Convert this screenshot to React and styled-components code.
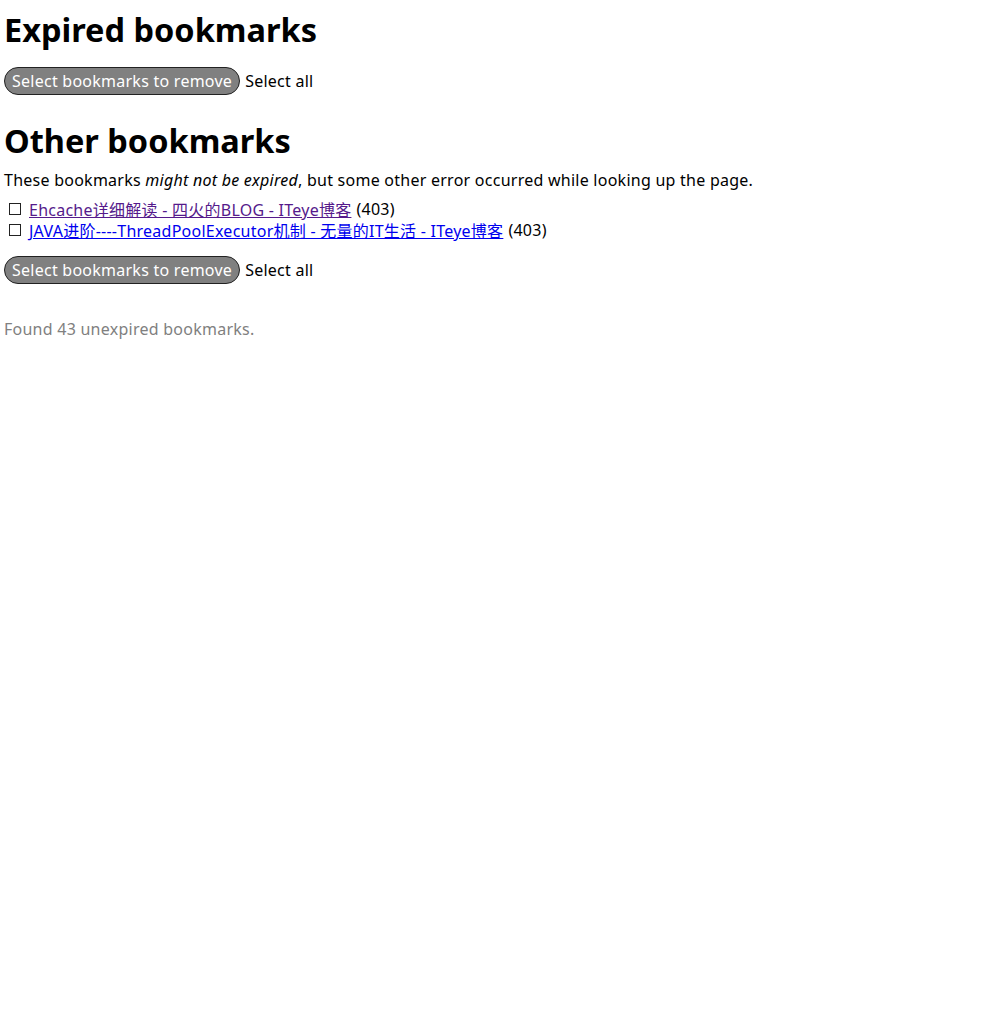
import React from "react";
import styled, { createGlobalStyle } from "styled-components";

const Global = createGlobalStyle`
  html, body { margin: 0; padding: 0; background: #fff; }
  body {
    font-family: "Noto Sans", "Open Sans", "Noto Sans CJK SC", sans-serif;
    font-size: 16px;
    letter-spacing: 0.25px;
    color: #000;
  }
`;

const Page = styled.main`
  padding: 4px;
`;

const Heading = styled.h1`
  font-size: 32.5px;
  font-weight: 700;
  line-height: 42px;
  letter-spacing: 0;
  margin: ${(p) => (p.$second ? "25px 0 7px" : "5px 0 16px")};
`;

const Actions = styled.div`
  display: flex;
  align-items: center;
  gap: 5px;
  margin: ${(p) => p.$top || 0}px 0 0;
`;

const Button = styled.button`
  font: inherit;
  letter-spacing: inherit;
  font-size: 16px;
  color: #fff;
  background: #808080;
  border: 1px solid #222;
  border-radius: 14px;
  padding: 2px 7px;
  height: 28px;
  line-height: 22px;
  cursor: pointer;
`;

const Label = styled.span`
  font-size: 16px;
`;

const Text = styled.p`
  margin: 0 0 7px;
  line-height: 22px;
`;

const List = styled.ul`
  list-style: none;
  margin: 0;
  padding: 0;
`;

const Item = styled.li`
  display: flex;
  align-items: center;
  height: 21px;
`;

const Box = styled.span`
  display: inline-block;
  width: 12px;
  height: 12px;
  border: 1px solid #222;
  margin: 0 8px 0 5px;
  box-sizing: border-box;
`;

const Link = styled.a`
  color: ${(p) => (p.$visited ? "#551a8b" : "#0000ee")};
  text-decoration: underline;
  margin-right: 5px;
`;

const Footer = styled.p`
  color: #808080;
  margin: 34px 0 0;
  line-height: 22px;
`;

export default function App() {
  return (
    <>
      <Global />
      <Page>
        <Heading>Expired bookmarks</Heading>
        <Actions>
          <Button>Select bookmarks to remove</Button>
          <Label>Select all</Label>
        </Actions>
        <Heading $second>Other bookmarks</Heading>
        <Text>
          These bookmarks <em>might not be expired</em>, but some other error occurred while looking up the page.
        </Text>
        <List>
          <Item>
            <Box />
            <Link href="#" $visited>Ehcache详细解读 - 四火的BLOG - ITeye博客</Link>
            (403)
          </Item>
          <Item>
            <Box />
            <Link href="#">JAVA进阶----ThreadPoolExecutor机制 - 无量的IT生活 - ITeye博客</Link>
            (403)
          </Item>
        </List>
        <Actions $top={16}>
          <Button>Select bookmarks to remove</Button>
          <Label>Select all</Label>
        </Actions>
        <Footer>Found 43 unexpired bookmarks.</Footer>
      </Page>
    </>
  );
}
